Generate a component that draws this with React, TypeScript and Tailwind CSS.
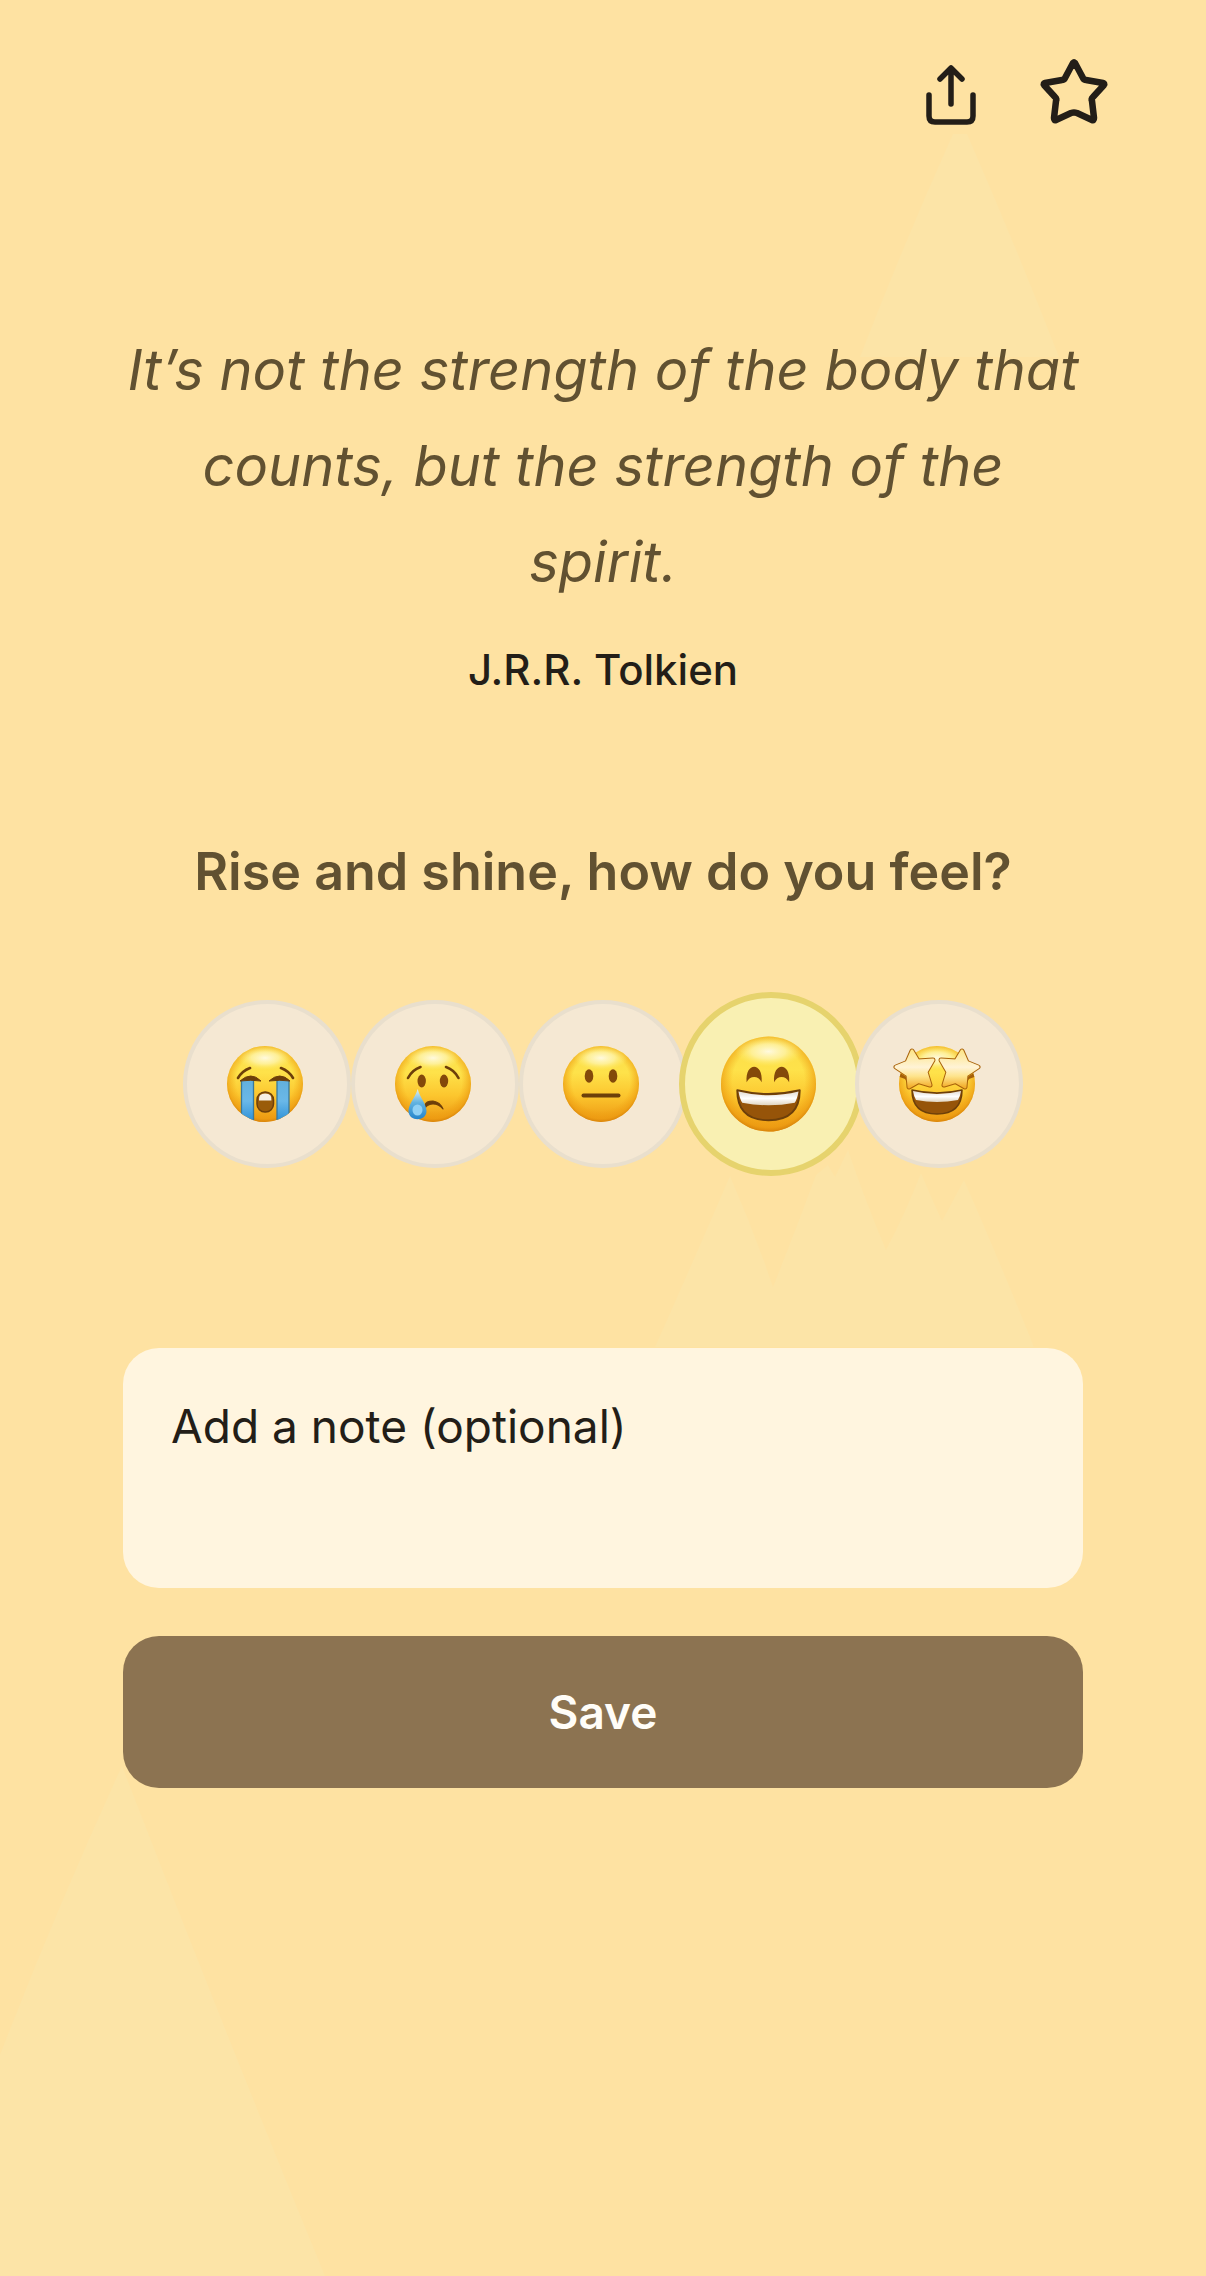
import { useState } from 'react';
import type { ReactNode } from 'react';

const BROWN = '#6d3f0a';

// --- Emoji faces, drawn on an 80x80 grid ---

function FaceDefs() {
  return (
    <svg className="absolute h-0 w-0" aria-hidden="true">
      <defs>
        <linearGradient id="face" x1="0" y1="0" x2="0" y2="1">
          <stop offset="0" stopColor="#fbdc4a" />
          <stop offset="0.35" stopColor="#fee24a" />
          <stop offset="0.65" stopColor="#fcc62e" />
          <stop offset="1" stopColor="#ec9712" />
        </linearGradient>
        <radialGradient id="rim" cx="0.5" cy="0.47" r="0.54">
          <stop offset="0.7" stopColor="#f0a010" stopOpacity="0" />
          <stop offset="0.9" stopColor="#ec9a10" stopOpacity="0.6" />
          <stop offset="1" stopColor="#cf7a08" stopOpacity="0.9" />
        </radialGradient>
        <radialGradient id="shine">
          <stop offset="0" stopColor="#fffbe6" stopOpacity="0.95" />
          <stop offset="0.5" stopColor="#fff7b8" stopOpacity="0.7" />
          <stop offset="1" stopColor="#ffef70" stopOpacity="0" />
        </radialGradient>
        <linearGradient id="stream" x1="0" y1="0" x2="0" y2="1">
          <stop offset="0" stopColor="#62b0dd" />
          <stop offset="0.5" stopColor="#6ab8e8" />
          <stop offset="1" stopColor="#2b8fd6" />
        </linearGradient>
        <linearGradient id="drop" x1="0" y1="0" x2="0" y2="1">
          <stop offset="0" stopColor="#e4f1ee" />
          <stop offset="0.45" stopColor="#62b3e0" />
          <stop offset="1" stopColor="#2484cb" />
        </linearGradient>
        <linearGradient id="teeth" x1="0" y1="0" x2="0" y2="1">
          <stop offset="0" stopColor="#e2dcd4" />
          <stop offset="0.5" stopColor="#ffffff" />
          <stop offset="1" stopColor="#e0d4bf" />
        </linearGradient>
        <linearGradient id="star" x1="0" y1="0" x2="0" y2="1">
          <stop offset="0" stopColor="#fde68c" />
          <stop offset="0.45" stopColor="#fff3d6" />
          <stop offset="0.7" stopColor="#fee48c" />
          <stop offset="1" stopColor="#f3ae2c" />
        </linearGradient>
        <clipPath id="disc">
          <circle cx="40" cy="40" r="38" />
        </clipPath>
      </defs>
    </svg>
  );
}

function Face({ children }: { children: ReactNode }) {
  return (
    <svg viewBox="2 0 80 80" className="h-full w-full overflow-visible" aria-hidden="true">
      <circle cx="40" cy="40" r="38" fill="url(#face)" />
      <circle cx="40" cy="40" r="38" fill="url(#rim)" />
      <ellipse cx="40" cy="14" rx="27" ry="12" fill="url(#shine)" />
      {children}
    </svg>
  );
}

function SobbingFace() {
  return (
    <Face>
      <g clipPath="url(#disc)">
        <path d="M16.5 36h12v42h-12z" fill="url(#stream)" />
        <path d="M52 36h12v42H52z" fill="url(#stream)" />
        <path d="M16.5 36v42M28.5 36v42M52 36v42M64 36v42" stroke="#39799b" strokeWidth="1.3" />
      </g>
      <path d="M13 34q4-7 12-10M68 34q-4-7-12-10" fill="none" stroke={BROWN} strokeLinecap="round" strokeWidth="2.6" />
      <path d="M15 37Q26 27 36 37 26 35.500 15 37zM44 37Q55 27 65 37 55 35.500 44 37z" fill={BROWN} stroke={BROWN} strokeWidth="1" strokeLinejoin="round" />
      <rect x="32" y="48" width="16.500" height="20" rx="8" fill="#9a5c0a" stroke={BROWN} strokeWidth="1.5" />
      <path d="M34 56.500q-1-7 6.200-7t6.200 7z" fill="#f6efe4" />
    </Face>
  );
}

function CryingFace() {
  return (
    <Face>
      <path d="M15 34q4-8 12.500-11M65.500 34q-4-8-12.500-11" fill="none" stroke={BROWN} strokeLinecap="round" strokeWidth="2.6" />
      <ellipse cx="28.700" cy="37" rx="4.200" ry="6.500" fill="#83490a" />
      <ellipse cx="51" cy="37" rx="4.200" ry="6.500" fill="#83490a" />
      <path d="M32 61q1-4 8-4 7 1 10 8-4-5-10-5-5 0-8 4z" fill={BROWN} stroke={BROWN} strokeWidth="1.2" strokeLinejoin="round" />
      <path d="M24.700 45C22 54 15.500 60 15.500 67 15.500 78 33.500 78 33.500 67 33.500 60 27 54 24.700 45z" fill="url(#drop)" />
      <ellipse cx="24.500" cy="66" rx="5" ry="5.500" fill="#8fd0f4" />
    </Face>
  );
}

function NeutralFace() {
  return (
    <Face>
      <ellipse cx="28" cy="32" rx="4.300" ry="6.800" fill="#83490a" />
      <ellipse cx="52" cy="32" rx="4.300" ry="6.800" fill="#83490a" />
      <path d="M22.500 51.500h35" stroke={BROWN} strokeLinecap="round" strokeWidth="4" />
    </Face>
  );
}

function GrinningFace() {
  return (
    <Face>
      <path d="M22.500 38.500C21 22 36 22 34.500 38.500 32 33 25 33 22.500 38.500z" fill="#83490a" />
      <path d="M44.500 38.500C43 22 58 22 56.500 38.500 54 33 47 33 44.500 38.500z" fill="#83490a" />
      <path d="M15 45q25 6 50 0 0 24-25 24T15 45z" fill="#965409" stroke={BROWN} strokeWidth="1.500" strokeLinejoin="round" />
      <path d="M16 46q24 6 48 0-1 6-3 9-21 4-42 0-2-3-3-9z" fill="url(#teeth)" />
    </Face>
  );
}

// Outline first, the star's own body over it
function StarEye() {
  return (
    <g strokeLinejoin="round">
      <path
        d="M15 7L21 17 36 16 29 28 33 41 21.500 37.500 12 43 11 31-1 23 10 18.500z"
        fill="#a9620a"
        stroke="#a9620a"
        strokeWidth="5"
      />
      <path
        d="M15 7L21 17 36 16 29 28 33 41 21.500 37.500 12 43 11 31-1 23 10 18.500z"
        fill="url(#star)"
        stroke="url(#star)"
        strokeWidth="3"
      />
    </g>
  );
}

function StarStruckFace() {
  return (
    <Face>
      <path d="M15 46q25 6 50 0 0 24-25 24T15 46z" fill="#965409" stroke={BROWN} strokeWidth="1.500" strokeLinejoin="round" />
      <path d="M16 47q24 6 48 0-1 6-3 9-21 4-42 0-2-3-3-9z" fill="url(#teeth)" />
      <g clipPath="url(#disc)">
        <path d="M0 27l11 7 1 8-4-7-8-3zM80 27l-11 7-1 8 4-7 8-3z" fill="#a35f08" />
      </g>
      <StarEye />
      <g transform="translate(80 0) scale(-1 1)">
        <StarEye />
      </g>
    </Face>
  );
}

const MOODS = [
  { id: 'awful', label: 'Awful', Icon: SobbingFace },
  { id: 'sad', label: 'Sad', Icon: CryingFace },
  { id: 'neutral', label: 'Neutral', Icon: NeutralFace },
  { id: 'happy', label: 'Happy', Icon: GrinningFace },
  { id: 'amazing', label: 'Amazing', Icon: StarStruckFace },
];

// --- Mood button ---

interface MoodButtonProps {
  label: string;
  selected: boolean;
  onSelect: () => void;
  children: ReactNode;
}

function MoodButton({ label, selected, onSelect, children }: MoodButtonProps) {
  return (
    <button
      type="button"
      aria-label={label}
      aria-pressed={selected}
      onClick={onSelect}
      className={`
        flex shrink-0 items-center justify-center rounded-full
        ${selected
          ? '-mx-2 size-46 border-6 border-[#e6d36d] bg-[#f9f0b2]'
          : 'size-42 border-4 border-[#e9dfcd] bg-[#f5e8d3]'}
      `}
    >
      <span className={selected ? 'size-25' : 'size-20'}>{children}</span>
    </button>
  );
}

// --- Mountains behind the content ---

function Mountains() {
  return (
    <svg
      viewBox="0 0 1206 2276"
      preserveAspectRatio="none"
      className="absolute inset-0 -z-10 h-full w-full"
      fill="#fce4a7"
      aria-hidden="true"
    >
      <path d="M953 134h14q48 110 92 223H860q44-114 93-223z" />
      <path d="M655 1347q38-85 75-171 24 55 43 111 22-55 43-112l12-10 7 12 13-27q17 50 38 100 20-38 35-77 10 24 21 48l22-41q36 82 70 167z" />
      <path d="M122 1766Q58 1905 0 2055v221h325Q220 2020 122 1766z" />
    </svg>
  );
}

export default function App() {
  const [mood, setMood] = useState('happy');
  const [note, setNote] = useState('');
  const [starred, setStarred] = useState(false);

  return (
    <div className="relative isolate min-h-screen bg-[#fee2a2] font-['Inter',sans-serif] text-[#231e18]">
      <Mountains />
      <FaceDefs />

      {/* Actions */}
      <header className="flex justify-end gap-11 px-23 pt-13">
        <button type="button" aria-label="Share" className="size-20">
          <svg viewBox="0 0 80 80" className="h-full w-full" fill="none" stroke="currentColor" strokeWidth="5.500" strokeLinecap="round" strokeLinejoin="round">
            <path d="M19 43v21q0 6 6 6h32q6 0 6-6V43M41 52V17M30 27l11-11 11 11" />
          </svg>
        </button>
        <button type="button" aria-label="Favorite" aria-pressed={starred} onClick={() => setStarred(!starred)} className="size-20">
          <svg viewBox="0 0 80 80" className="h-full w-full" fill={starred ? 'currentColor' : 'none'} stroke="currentColor" strokeWidth="6.500" strokeLinecap="round" strokeLinejoin="round">
            <path d="M39 11q1-1 2 0l8 15q1 2 3 2l17 3q2 1 1 2L59 45q-2 2-1 4l2 17q0 3-2 2l-15-7q-3-1-6 0l-15 7q-2 1-2-2l2-17q1-2-1-4L10 33q-1-1 1-2l17-3q2 0 3-2z" />
          </svg>
        </button>
      </header>

      <main className="mx-auto flex max-w-240 flex-col items-center pt-[190px]">
        <figure className="text-center">
          <blockquote className="text-[56px] leading-24 italic text-[#615131]">
            It’s not the strength of the body that counts, but the strength of the spirit.
          </blockquote>
          <figcaption className="mt-7 text-[42px] leading-16 font-medium">J.R.R. Tolkien</figcaption>
        </figure>

        <h1 className="mt-[130px] text-center text-[52px] leading-20 font-semibold text-[#615131]">
          Rise and shine, how do you feel?
        </h1>

        <div className="mt-20 flex items-center justify-center">
          {MOODS.map(({ id, label, Icon }) => (
            <MoodButton key={id} label={label} selected={mood === id} onSelect={() => setMood(id)}>
              <Icon />
            </MoodButton>
          ))}
        </div>

        <textarea
          aria-label="Add a note (optional)"
          placeholder="Add a note (optional)"
          value={note}
          onChange={e => setNote(e.target.value)}
          className="mt-43 block h-60 w-full resize-none rounded-[36px] bg-[#fff5df] px-12 py-12 text-[46px] leading-15 placeholder:text-[#231e18] focus:outline-none"
        />

        <button
          type="button"
          className="mt-12 w-full rounded-[36px] bg-[#8c7351] py-[46px] text-[46px] leading-15 font-semibold text-[#fffdf8]"
        >
          Save
        </button>
      </main>
    </div>
  );
}
